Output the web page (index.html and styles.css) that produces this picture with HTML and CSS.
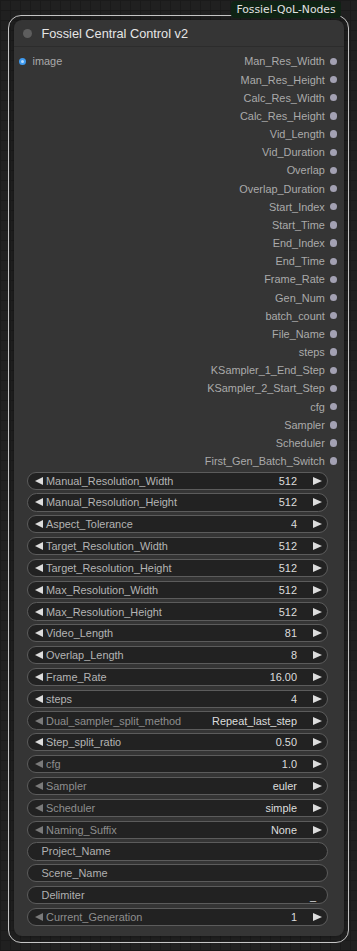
FILE: index.html
```html
<!DOCTYPE html>
<html>
<head>
<meta charset="utf-8">
<link rel="stylesheet" href="styles.css">
</head>
<body>
<div class="canvas">
  <div class="badge">Fossiel-QoL-Nodes</div>
  <div class="sel">
    <div class="node">
      <div class="title"><span class="tdot"></span><span class="ttext">Fossiel Central Control v2</span></div>
      <div class="slots">
        <div class="row"><span class="in"><span class="idot"></span>image</span><span class="out">Man_Res_Width<span class="odot"></span></span></div>
        <div class="row"><span></span><span class="out">Man_Res_Height<span class="odot"></span></span></div>
        <div class="row"><span></span><span class="out">Calc_Res_Width<span class="odot"></span></span></div>
        <div class="row"><span></span><span class="out">Calc_Res_Height<span class="odot"></span></span></div>
        <div class="row"><span></span><span class="out">Vid_Length<span class="odot"></span></span></div>
        <div class="row"><span></span><span class="out">Vid_Duration<span class="odot"></span></span></div>
        <div class="row"><span></span><span class="out">Overlap<span class="odot"></span></span></div>
        <div class="row"><span></span><span class="out">Overlap_Duration<span class="odot"></span></span></div>
        <div class="row"><span></span><span class="out">Start_Index<span class="odot"></span></span></div>
        <div class="row"><span></span><span class="out">Start_Time<span class="odot"></span></span></div>
        <div class="row"><span></span><span class="out">End_Index<span class="odot"></span></span></div>
        <div class="row"><span></span><span class="out">End_Time<span class="odot"></span></span></div>
        <div class="row"><span></span><span class="out">Frame_Rate<span class="odot"></span></span></div>
        <div class="row"><span></span><span class="out">Gen_Num<span class="odot"></span></span></div>
        <div class="row"><span></span><span class="out">batch_count<span class="odot"></span></span></div>
        <div class="row"><span></span><span class="out">File_Name<span class="odot"></span></span></div>
        <div class="row"><span></span><span class="out">steps<span class="odot"></span></span></div>
        <div class="row"><span></span><span class="out">KSampler_1_End_Step<span class="odot"></span></span></div>
        <div class="row"><span></span><span class="out">KSampler_2_Start_Step<span class="odot"></span></span></div>
        <div class="row"><span></span><span class="out">cfg<span class="odot"></span></span></div>
        <div class="row"><span></span><span class="out">Sampler<span class="odot"></span></span></div>
        <div class="row"><span></span><span class="out">Scheduler<span class="odot"></span></span></div>
        <div class="row"><span></span><span class="out">First_Gen_Batch_Switch<span class="odot"></span></span></div>
      </div>
      <div class="widgets">
        <div class="w"><span class="al"></span><span class="lbl">Manual_Resolution_Width</span><span class="val">512</span><span class="ar"></span></div>
        <div class="w"><span class="al"></span><span class="lbl">Manual_Resolution_Height</span><span class="val">512</span><span class="ar"></span></div>
        <div class="w"><span class="al"></span><span class="lbl">Aspect_Tolerance</span><span class="val">4</span><span class="ar"></span></div>
        <div class="w"><span class="al"></span><span class="lbl">Target_Resolution_Width</span><span class="val">512</span><span class="ar"></span></div>
        <div class="w"><span class="al"></span><span class="lbl">Target_Resolution_Height</span><span class="val">512</span><span class="ar"></span></div>
        <div class="w"><span class="al"></span><span class="lbl">Max_Resolution_Width</span><span class="val">512</span><span class="ar"></span></div>
        <div class="w"><span class="al"></span><span class="lbl">Max_Resolution_Height</span><span class="val">512</span><span class="ar"></span></div>
        <div class="w"><span class="al"></span><span class="lbl">Video_Length</span><span class="val">81</span><span class="ar"></span></div>
        <div class="w"><span class="al"></span><span class="lbl">Overlap_Length</span><span class="val">8</span><span class="ar"></span></div>
        <div class="w"><span class="al"></span><span class="lbl">Frame_Rate</span><span class="val">16.00</span><span class="ar"></span></div>
        <div class="w"><span class="al"></span><span class="lbl">steps</span><span class="val">4</span><span class="ar"></span></div>
        <div class="w dim"><span class="al"></span><span class="lbl">Dual_sampler_split_method</span><span class="val">Repeat_last_step</span><span class="ar"></span></div>
        <div class="w"><span class="al"></span><span class="lbl">Step_split_ratio</span><span class="val">0.50</span><span class="ar"></span></div>
        <div class="w dim"><span class="al"></span><span class="lbl">cfg</span><span class="val">1.0</span><span class="ar"></span></div>
        <div class="w dim"><span class="al"></span><span class="lbl">Sampler</span><span class="val">euler</span><span class="ar"></span></div>
        <div class="w dim"><span class="al"></span><span class="lbl">Scheduler</span><span class="val">simple</span><span class="ar"></span></div>
        <div class="w dim"><span class="al"></span><span class="lbl">Naming_Suffix</span><span class="val">None</span><span class="ar"></span></div>
        <div class="w txt"><span class="lbl">Project_Name</span><span class="val"></span></div>
        <div class="w txt"><span class="lbl">Scene_Name</span><span class="val"></span></div>
        <div class="w txt"><span class="lbl">Delimiter</span><span class="val">_</span></div>
        <div class="w dim"><span class="al"></span><span class="lbl">Current_Generation</span><span class="val">1</span><span class="ar"></span></div>
      </div>
    </div>
  </div>
</div>
</body>
</html>
```
FILE: styles.css
```css
html, body {
  margin: 0;
  padding: 0;
}
body {
  width: 357px;
  height: 951px;
  overflow: hidden;
  background-color: #202020;
  background-image:
    linear-gradient(to right, #1a1a1a 1px, transparent 1px),
    linear-gradient(to bottom, #1a1a1a 1px, transparent 1px);
  background-size: 10px 10px;
  font-family: "Liberation Sans", Arial, sans-serif;
}
.canvas {
  position: relative;
  padding: 15px 0 0 8px;
}
.badge {
  position: absolute;
  left: 231px;
  top: 1px;
  width: 110px;
  height: 17px;
  background: #0f2314;
  border-radius: 4px;
  color: #e2e2e2;
  font-family: "DejaVu Sans", sans-serif;
  font-size: 10.8px;
  line-height: 17px;
  text-align: center;
  z-index: 2;
}
.sel {
  box-sizing: border-box;
  width: 341px;
  border: 1.5px solid #c4c4c4;
  border-radius: 13px;
  padding: 3.5px 3.5px 6px 4.5px;
}
.node {
  width: 330px;
  background: #353535;
  border-radius: 8px;
  padding-bottom: 10.5px;
  box-shadow: 0 0 4px rgba(0,0,0,0.4);
}
.title {
  height: 27.3px;
  display: flex;
  align-items: center;
  padding-left: 9.4px;
  padding-top: 2px;
  border-bottom: 1px solid #2c2c2c;
  box-sizing: border-box;
}
.tdot {
  width: 9.3px;
  height: 9.3px;
  border-radius: 50%;
  background: #5e5e5e;
  margin-right: 9.3px;
}
.ttext {
  color: #e6e6e6;
  font-size: 12.74px;
}
.slots {
  padding: 5.5px 6.2px 0 5.5px;
}
.row {
  height: 18.18px;
  display: flex;
  justify-content: space-between;
  align-items: center;
  font-size: 10.92px;
  color: #aaaaaa;
}
.in, .out {
  display: flex;
  align-items: center;
}
.idot {
  width: 7px;
  height: 7px;
  border-radius: 50%;
  background: #b8dcff;
  box-sizing: border-box;
  border: 2px solid #3f9bf0;
  margin-right: 6.5px;
}
.odot {
  width: 7.4px;
  height: 7.4px;
  border-radius: 50%;
  background: #a3a1b3;
  margin-left: 5.1px;
}
.widgets {
  margin-top: 1.3px;
  display: flex;
  flex-direction: column;
  gap: 3.64px;
  padding: 0 15.5px 0 13.5px;
}
.w {
  box-sizing: border-box;
  height: 18.2px;
  display: flex;
  align-items: center;
  border: 1px solid #5c5c5c;
  border-radius: 10px;
  background: #222222;
  font-size: 10.92px;
  padding: 0 5px 0 6.5px;
}
.al {
  width: 0;
  height: 0;
  border-top: 4.5px solid transparent;
  border-bottom: 4.5px solid transparent;
  border-right: 8px solid #dddddd;
  margin-right: 3.5px;
}
.ar {
  width: 0;
  height: 0;
  border-top: 4.5px solid transparent;
  border-bottom: 4.5px solid transparent;
  border-left: 9px solid #dddddd;
  margin-left: 16px;
}
.lbl {
  color: #b4b4b4;
  flex: 1;
  white-space: nowrap;
}
.val {
  color: #dddddd;
  white-space: nowrap;
}
.dim .al {
  border-right-color: #7a7a7a;
}
.dim .lbl {
  color: #8e8e8e;
}
.txt {
  padding-left: 13.5px;
  padding-right: 11px;
}
.txt .lbl {
  color: #b0b0b0;
}
.txt .val {
  align-self: flex-end;
  line-height: 14px;
}
```
